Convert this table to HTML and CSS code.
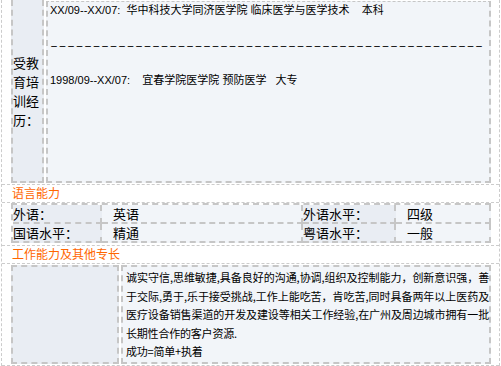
FILE: index.html
```html
<!DOCTYPE html>
<html lang="zh-CN">
<head>
    <meta charset="UTF-8">
    <meta name="viewport" content="width=device-width, initial-scale=1.0">
    <title>个人简历</title>
    <link rel="stylesheet" href="styles.css">
</head>
<body>
    <div class="resume">
        <!-- 教育经历 -->
        <div class="row edu-row">
            <div class="label-cell edu-label">受教育培训经历：</div>
            <div class="text-cell edu-text">
                <p>XX/09--XX/07:&nbsp; 华中科技大学同济医学院 临床医学与医学技术&nbsp;&nbsp;&nbsp; 本科</p>
                <p>&nbsp;</p>
                <p class="rule">－－－－－－－－－－－－－－－－－－－－－－－－－－－－－－－－－－－－－－－－－－－－－－－－－－－</p>
                <p>&nbsp;</p>
                <p>1998/09--XX/07:&nbsp;&nbsp;&nbsp; 宜春学院医学院 预防医学&nbsp;&nbsp; 大专</p>
            </div>
        </div>

        <!-- 语言能力 -->
        <div class="row section-title">语言能力</div>
        <div class="row lang-row">
            <div class="lang-grid">
                <div class="label-cell">外语：</div>
                <div class="text-cell">英语</div>
                <div class="label-cell">外语水平：</div>
                <div class="text-cell">四级</div>
                <div class="label-cell">国语水平：</div>
                <div class="text-cell">精通</div>
                <div class="label-cell">粤语水平：</div>
                <div class="text-cell">一般</div>
            </div>
        </div>

        <!-- 工作能力 -->
        <div class="row section-title">工作能力及其他专长</div>
        <div class="row work-row">
            <div class="label-cell work-label"></div>
            <div class="text-cell work-text">诚实守信,思维敏捷,具备良好的沟通,协调,组织及控制能力，创新意识强，善于交际,勇于,乐于接受挑战,工作上能吃苦，肯吃苦,同时具备两年以上医药及医疗设备销售渠道的开发及建设等相关工作经验,在广州及周边城市拥有一批长期性合作的客户资源.<br>成功=简单+执着</div>
        </div>
    </div>
</body>
</html>
```

FILE: styles.css
```css
/* Reset */
* {
    margin: 0;
    padding: 0;
    box-sizing: border-box;
}

body {
    font-family: "Noto Sans CJK SC", sans-serif;
    color: #000;
    background: #fff;
}

.resume {
    width: 499px;
    margin-left: 1px;
    border-left: 1px dashed #ccc;
    border-right: 1px dashed #ccc;
}

.row {
    padding: 0 8px 0 9px;
    border-bottom: 1px dashed #ccc;
}

.label-cell {
    background: #e9edf3;
    border: 2px dashed #c6c6c6;
}

.text-cell {
    background: #f2f5f9;
    border: 2px dashed #c6c6c6;
}

/* 两栏：标签 + 内容 */
.edu-row, .work-row {
    display: flex;
    gap: 2px;
    padding-bottom: 1px;
}

.edu-label {
    width: 33px;
    border-top: none;
    display: flex;
    align-items: center;
    font-size: 13px;
    line-height: 19px;
}

.edu-text {
    flex: 1;
    height: 182px;
    margin-top: 1px;
    border-top-width: 1px;
    padding-left: 2px;
    font-family: "Liberation Sans", "Noto Sans CJK SC", sans-serif;
    font-size: 11px;
    line-height: 17.5px;
    white-space: nowrap;
}

/* 分隔线，一串全角横杠 */
.edu-text .rule {
    font-family: "Noto Sans CJK SC", sans-serif;
    font-size: 8px;
    font-weight: bold;
    letter-spacing: 0.5px;
    overflow: hidden;
}

.section-title {
    height: 18px;
    padding-left: 10px;
    font-size: 12px;
    line-height: 16px;
    color: #ff6600;
}

.lang-row {
    padding-bottom: 2px;
}

.lang-grid {
    display: grid;
    grid-template-columns: 89px 201px 93px 95px;
    border-top: 2px dashed #c6c6c6;
    border-left: 2px dashed #c6c6c6;
    font-size: 13px;
}

.lang-grid > div {
    height: 19px;
    line-height: 17px;
    border-width: 0 2px 2px 0;
}

.lang-grid .text-cell {
    padding-left: 11px;
}

.work-row {
    padding-top: 1px;
}

.work-label {
    width: 108px;
    height: 99px;
}

.work-text {
    flex: 1;
    height: 99px;
    padding: 1px 0 0 3px;
    font-size: 11px;
    line-height: 18.5px;
    letter-spacing: -0.2px;
    text-align: justify;
}
```
